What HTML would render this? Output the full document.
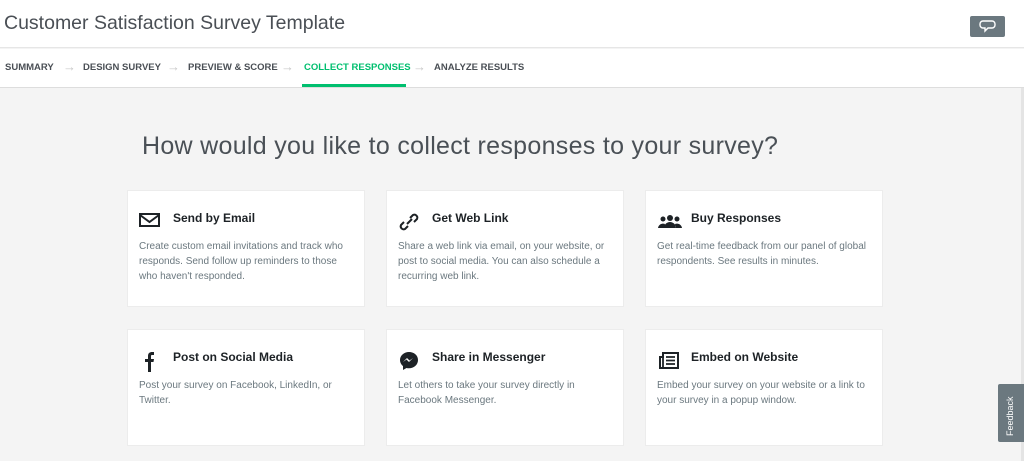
<!DOCTYPE html>
<html><head><meta charset="utf-8"><style>
*{margin:0;padding:0;box-sizing:border-box}
body{width:1024px;height:461px;overflow:hidden;background:#f4f4f4;font-family:"Liberation Sans",sans-serif;position:relative}
.hdr{position:absolute;left:0;top:0;width:1024px;height:48px;background:#fff;border-bottom:1px solid #e6e6e6}
.hdr h1{position:absolute;left:4px;top:12px;font-size:19.5px;font-weight:normal;color:#4a4f55}
.cbtn{position:absolute;left:970px;top:16px;width:35px;height:21px;background:#6b787f;border-radius:2px}
.nav{position:absolute;left:0;top:49px;width:1024px;height:39px;background:#fff;border-bottom:1px solid #ddd}
.nav span{position:absolute;top:13px;font-size:9.5px;font-weight:bold;color:#4a4f55}
.nav .ar{color:#c8c8c8;font-weight:normal;font-size:13px;top:10px}
.nav .act{color:#00bf6f}
.ul{position:absolute;left:302px;top:84px;width:104px;height:3px;background:#00bf6f}
h2{position:absolute;left:142px;top:132px;font-size:25px;font-weight:normal;color:#4a5056;letter-spacing:0.3px}
.card{position:absolute;width:238px;height:117px;background:#fff;border:1px solid #ececec}
.card svg{position:absolute;left:11px;top:20px}
.card b{position:absolute;left:45px;top:20px;font-size:12px;color:#1d2226}
.card p{position:absolute;left:11px;top:48px;width:212px;font-size:10px;line-height:15px;color:#6b787f}
.fb{position:absolute;left:998px;top:384px;width:26px;height:58px;background:#6b787f;border-radius:2px 0 0 2px}
.fb span{position:absolute;left:7px;top:52px;transform:rotate(-90deg);transform-origin:0 0;color:#fff;font-size:9px}
.sb{position:absolute;left:1021px;top:88px;width:3px;height:373px;background:#e4e4e4}
</style></head><body>
<div class="hdr"><h1>Customer Satisfaction Survey Template</h1>
<div class="cbtn"><svg width="35" height="21" viewBox="0 0 35 21"><path d="M13 5h9a3 3 0 0 1 3 3v1a3 3 0 0 1-3 3h-4l-3 3v-3h-2a3 3 0 0 1-3-3V8a3 3 0 0 1 3-3z" fill="none" stroke="#fff" stroke-width="1.4"/></svg></div></div>
<div class="nav">
<span style="left:5px">SUMMARY</span><span class="ar" style="left:63px">→</span>
<span style="left:83px">DESIGN SURVEY</span><span class="ar" style="left:167px">→</span>
<span style="left:188px">PREVIEW &amp; SCORE</span><span class="ar" style="left:281px">→</span>
<span class="act" style="left:304px">COLLECT RESPONSES</span><span class="ar" style="left:413px">→</span>
<span style="left:434px">ANALYZE RESULTS</span>
</div>
<div class="ul"></div>
<h2>How would you like to collect responses to your survey?</h2>

<div class="card" style="left:127px;top:190px"><svg width="22" height="16"><rect x="1" y="3" width="19" height="12" fill="none" stroke="#1d2226" stroke-width="2"/><path d="M1 4l9.5 7L20 4" fill="none" stroke="#1d2226" stroke-width="2"/></svg><b>Send by Email</b><p>Create custom email invitations and track who responds. Send follow up reminders to those who haven't responded.</p></div>
<div class="card" style="left:386px;top:190px"><svg width="22" height="22"><path d="M9 13l5-5M6 11l-3 3a3 3 0 0 0 4 4l3-3M16 11l3-3a3 3 0 0 0-4-4l-3 3" fill="none" stroke="#1d2226" stroke-width="2"/></svg><b>Get Web Link</b><p>Share a web link via email, on your website, or post to social media. You can also schedule a recurring web link.</p></div>
<div class="card" style="left:645px;top:190px"><svg width="26" height="18"><circle cx="13" cy="7" r="3" fill="#1d2226"/><circle cx="6" cy="8" r="2.5" fill="#1d2226"/><circle cx="20" cy="8" r="2.5" fill="#1d2226"/><path d="M7 17a6 6 0 0 1 12 0zM1 17a5 5 0 0 1 7-4l-1 4zM25 17a5 5 0 0 0-7-4l1 4z" fill="#1d2226"/></svg><b>Buy Responses</b><p>Get real-time feedback from our panel of global respondents. See results in minutes.</p></div>
<div class="card" style="left:127px;top:329px"><svg width="22" height="22"><path d="M9 22V12H6V9h3V6c0-3 2-4 4-4h2v3h-2c-1 0-1 .5-1 1v3h3l-.5 3H12v10z" fill="#1d2226"/></svg><b>Post on Social Media</b><p>Post your survey on Facebook, LinkedIn, or<br>Twitter.</p></div>
<div class="card" style="left:386px;top:329px"><svg width="22" height="22"><path d="M11 2C6 2 2 5.5 2 10c0 2.5 1.2 4.6 3 6v4l3.5-2c.8.2 1.6.3 2.5.3 5 0 9-3.6 9-8.3S16 2 11 2z" fill="#1d2226"/><path d="M5 12l4-4 2.5 2.5L15 8l-4 4-2.5-2.5z" fill="#fff"/></svg><b>Share in Messenger</b><p>Let others to take your survey directly in<br>Facebook Messenger.</p></div>
<div class="card" style="left:645px;top:329px"><svg width="22" height="20"><path d="M6 3h15v15H3V7h3z" fill="none" stroke="#1d2226" stroke-width="2"/><path d="M6 7v11M9 7h9M9 10.5h9M9 14h9" stroke="#1d2226" stroke-width="1.8"/></svg><b>Embed on Website</b><p>Embed your survey on your website or a link to your survey in a popup window.</p></div>
<div class="sb"></div>
<div class="fb"><span>Feedback</span></div>
</body></html>
